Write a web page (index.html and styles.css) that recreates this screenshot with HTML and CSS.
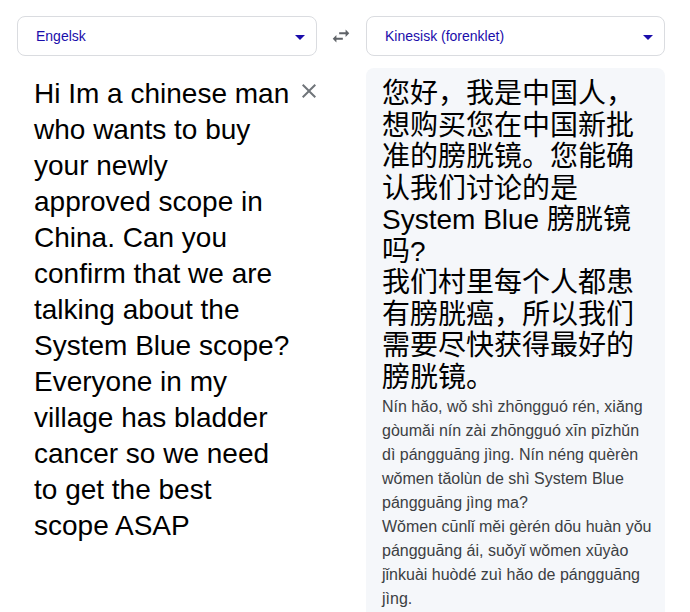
FILE: index.html
```html
<!DOCTYPE html>
<html>
<head>
<meta charset="utf-8">
<link rel="stylesheet" href="styles.css">
</head>
<body>
<div class="page">
  <div class="header">
    <div class="select">
      <span class="select-label">Engelsk</span>
      <span class="caret"></span>
    </div>
    <div class="swap">
      <svg viewBox="0 0 24 24" width="22" height="22"><path fill="#5f6368" d="M6.99 11L3 15l3.99 4v-3H14v-2H6.99v-3zM21 9l-3.99-4v3H10v2h7.01v3L21 9z"/></svg>
    </div>
    <div class="select">
      <span class="select-label">Kinesisk (forenklet)</span>
      <span class="caret"></span>
    </div>
  </div>
  <div class="main">
    <div class="source">
      <div class="source-text">Hi Im a chinese man<br>who wants to buy<br>your newly<br>approved scope in<br>China. Can you<br>confirm that we are<br>talking about the<br>System Blue scope?<br>Everyone in my<br>village has bladder<br>cancer so we need<br>to get the best<br>scope ASAP</div>
      <svg class="clear" viewBox="0 0 24 24" width="24" height="24"><path fill="#70757a" d="M19 6.41L17.59 5 12 10.59 6.41 5 5 6.41 10.59 12 5 17.59 6.41 19 12 13.41 17.59 19 19 17.59 13.41 12z"/></svg>
    </div>
    <div class="gap"></div>
    <div class="target">
      <div class="target-text">您好，我是中国人，<br>想购买您在中国新批<br>准的膀胱镜。您能确<br>认我们讨论的是<br>System Blue 膀胱镜<br>吗?<br>我们村里每个人都患<br>有膀胱癌，所以我们<br>需要尽快获得最好的<br>膀胱镜。</div>
      <div class="pinyin">Nín hǎo, wǒ shì zhōngguó rén, xiǎng<br>gòumǎi nín zài zhōngguó xīn pīzhǔn<br>dì pángguāng jìng. Nín néng quèrèn<br>wǒmen tǎolùn de shì System Blue<br>pángguāng jìng ma?<br>Wǒmen cūnlǐ měi gèrén dōu huàn yǒu<br>pángguāng ái, suǒyǐ wǒmen xūyào<br>jǐnkuài huòdé zuì hǎo de pángguāng<br>jìng.</div>
    </div>
  </div>
</div>
</body>
</html>
```
FILE: styles.css
```css
html, body {
  margin: 0;
  padding: 0;
  background: #ffffff;
}
body {
  font-family: "Liberation Sans", Arial, "Noto Sans CJK SC", sans-serif;
  color: #000000;
  height: 612px;
  overflow: hidden;
}
.page {
  padding: 16px 0 0 17px;
}
.header {
  display: grid;
  grid-template-columns: 300px 49px 299px;
  height: 40px;
}
.select {
  box-sizing: border-box;
  height: 40px;
  border: 1px solid #dadce0;
  border-radius: 8px;
  display: flex;
  align-items: center;
  justify-content: space-between;
  padding: 0 11px 0 18px;
}
.select-label {
  font-size: 14px;
  color: #1a0dab;
}
.caret {
  width: 0;
  height: 0;
  border-left: 5px solid transparent;
  border-right: 5px solid transparent;
  border-top: 5px solid #1a0dab;
  margin-top: 2px;
}
.swap {
  display: flex;
  align-items: center;
  justify-content: center;
  padding-right: 2px;
}
.main {
  display: grid;
  grid-template-columns: 300px 49px 299px;
  margin-top: 12px;
}
.source {
  display: flex;
  justify-content: space-between;
  align-items: flex-start;
  padding: 8px 0 0 17px;
}
.source-text {
  font-size: 28px;
  line-height: 36px;
  color: #000000;
  white-space: nowrap;
}
.clear {
  margin-top: 3px;
  margin-right: -4px;
}
.target {
  background: #f5f7fa;
  border-radius: 8px 8px 0 0;
  padding: 10px 16px 0 16px;
  min-height: 560px;
}
.target-text {
  font-family: "Liberation Sans", Arial, "Noto Sans CJK SC", sans-serif;
  font-size: 28px;
  line-height: 31.5px;
  color: #000000;
  white-space: nowrap;
}
.pinyin {
  margin-top: 2px;
  font-size: 16px;
  line-height: 24px;
  color: #3c4043;
  white-space: nowrap;
}
```
